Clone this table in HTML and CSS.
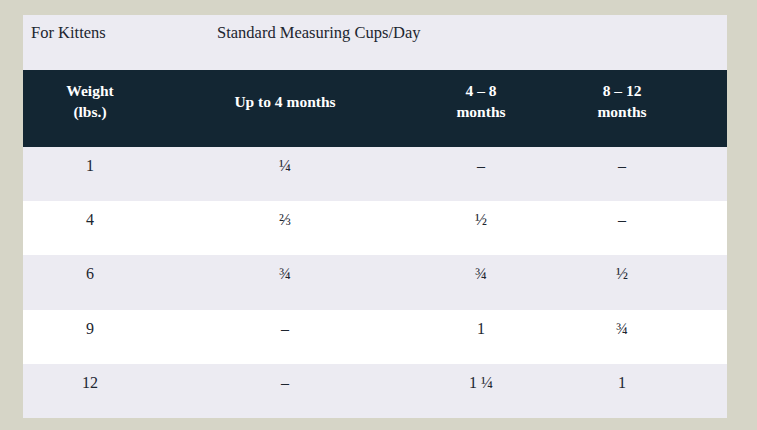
FILE: index.html
```html
<!DOCTYPE html>
<html lang="en">
<head>
<meta charset="utf-8">
<title>Kitten Feeding Chart</title>
<link rel="stylesheet" href="styles.css">
</head>
<body>
<div class="chart">
  <div class="caption">
    <span class="cap-left">For Kittens</span>
    <span class="cap-right">Standard Measuring Cups/Day</span>
  </div>
  <table class="feed">
    <colgroup>
      <col class="c1"><col class="c2"><col class="c3"><col class="c4"><col class="c5">
    </colgroup>
    <thead>
      <tr>
        <th>Weight<br>(lbs.)</th>
        <th>Up to 4 months</th>
        <th>4 – 8<br>months</th>
        <th>8 – 12<br>months</th>
        <th></th>
      </tr>
    </thead>
    <tbody>
      <tr class="alt"><td>1</td><td>¼</td><td>–</td><td>–</td><td></td></tr>
      <tr><td>4</td><td>⅔</td><td>½</td><td>–</td><td></td></tr>
      <tr class="alt"><td>6</td><td>¾</td><td>¾</td><td>½</td><td></td></tr>
      <tr><td>9</td><td>–</td><td>1</td><td>¾</td><td></td></tr>
      <tr class="alt"><td>12</td><td>–</td><td>1 ¼</td><td>1</td><td></td></tr>
    </tbody>
  </table>
</div>
</body>
</html>
```
FILE: styles.css
```css
html, body {
  margin: 0;
  padding: 0;
}
body {
  background: #d6d5c7;
  font-family: "Liberation Serif", "DejaVu Serif", serif;
  color: #1d2630;
  padding: 15px 0 0 23px;
}
.chart {
  width: 704px;
}
.caption {
  display: flex;
  background: #ecebf2;
  height: 55px;
  box-sizing: border-box;
  padding: 6px 0 0 8px;
  font-size: 16.5px;
  line-height: 24px;
  color: #1d2630;
}
.cap-left {
  width: 186px;
}
.feed {
  width: 704px;
  border-collapse: collapse;
  table-layout: fixed;
}
.c1 { width: 134px; }
.c2 { width: 256px; }
.c3 { width: 136px; }
.c4 { width: 146px; }
.c5 { width: 32px; }
.feed thead tr {
  background: #132633;
  height: 77px;
}
.feed th {
  color: #ffffff;
  font-weight: bold;
  font-size: 15.5px;
  line-height: 21px;
  padding: 10px 0 25px;
  vertical-align: middle;
  text-align: center;
}
.feed tbody tr {
  background: #ffffff;
  height: 54.2px;
}
.feed tbody tr.alt {
  background: #ecebf2;
}
.feed td {
  font-size: 16px;
  line-height: 24px;
  padding: 7px 0 0;
  vertical-align: top;
  text-align: center;
}
```
